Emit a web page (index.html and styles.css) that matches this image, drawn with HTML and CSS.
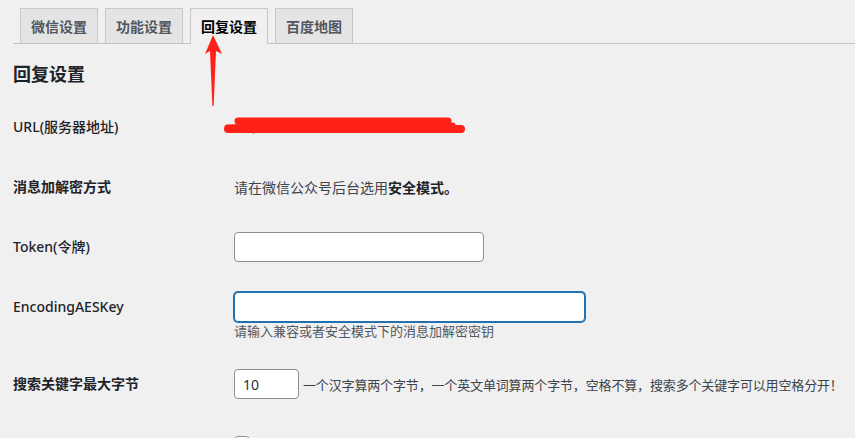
FILE: index.html
```html
<!DOCTYPE html>
<html lang="zh-CN">
<head>
<meta charset="utf-8">
<title>回复设置</title>
<link rel="stylesheet" href="styles.css">
</head>
<body>
<div class="wrap">
  <nav class="tabs">
    <a class="tab">微信设置</a>
    <a class="tab">功能设置</a>
    <a class="tab active">回复设置</a>
    <a class="tab">百度地图</a>
  </nav>
  <h2 class="title">回复设置</h2>
  <div class="form">
    <div class="row">
      <label class="label light">URL(服务器地址)</label>
      <div class="field url">
        <span class="hidden-url">http://</span>
        <svg class="scribble" width="250" height="22" viewBox="0 0 250 22">
          <path d="M15 5 L225 5" stroke="#ff2117" stroke-width="7" stroke-linecap="round" fill="none"/>
          <path d="M5 13 L238 13" stroke="#ff2117" stroke-width="8" stroke-linecap="round" fill="none"/>
          <path d="M4 11 L60 9 L230 9" stroke="#ff2117" stroke-width="5" stroke-linecap="round" fill="none"/>
        </svg>
      </div>
    </div>
    <div class="row">
      <div class="label">消息加解密方式</div>
      <div class="field text">请在微信公众号后台选用<b>安全模式。</b></div>
    </div>
    <div class="row">
      <label class="label light">Token(令牌)</label>
      <div class="field"><input class="input token" type="text"></div>
    </div>
    <div class="row">
      <label class="label light">EncodingAESKey</label>
      <div class="field col">
        <input class="input aes focus" type="text">
        <p class="desc">请输入兼容或者安全模式下的消息加解密密钥</p>
      </div>
    </div>
    <div class="row">
      <div class="label">搜索关键字最大字节</div>
      <div class="field inline">
        <input class="input small" type="text" value="10">
        <span class="note">一个汉字算两个字节，一个英文单词算两个字节，空格不算，搜索多个关键字可以用空格分开！</span>
      </div>
    </div>
    <div class="row">
      <div class="label"></div>
      <div class="field"><span class="checkbox"></span></div>
    </div>
  </div>
</div>
<svg class="arrow" width="30" height="80" viewBox="0 0 30 80">
  <path d="M13 4 L22 23 L16 20 L13.6 75 L12.4 75 L10 20 L5 23 Z" fill="#ff2117"/>
</svg>
</body>
</html>
```
FILE: styles.css
```css
html, body {
  margin: 0;
  padding: 0;
  background: #f0f0f1;
  overflow: hidden;
}
body {
  position: relative;
  font-family: "Noto Sans", "Noto Sans CJK SC", sans-serif;
  color: #1d2327;
  font-size: 14px;
  width: 855px;
  height: 438px;
}
.wrap {
  margin-left: 13px;
}
.tabs {
  display: flex;
  padding-top: 8px;
  border-bottom: 1px solid #c3c4c7;
  height: 35px;
  box-sizing: content-box;
}
.tab {
  margin-left: 7px;
  padding: 5px 10px;
  height: 24px;
  line-height: 24px;
  border: 1px solid #c8c8ca;
  border-bottom: none;
  background: #e4e4e5;
  color: #50575e;
  font-weight: 700;
  font-size: 14px;
  font-family: "Noto Sans CJK SC", sans-serif;
  white-space: nowrap;
  text-align: center;
}
.tab.active {
  background: #f0f0f1;
  color: #000;
  height: 25px;
  margin-bottom: -1px;
}
.title {
  margin: 0;
  margin-top: 17px;
  font-size: 18px;
  line-height: 24px;
  font-weight: 700;
  font-family: "Noto Sans CJK SC", sans-serif;
  color: #1d2327;
}
.form {
  margin-top: 27px;
  display: flex;
  flex-direction: column;
  gap: 30px;
}
.row {
  display: grid;
  grid-template-columns: 221px 1fr;
  min-height: 30px;
}
.label {
  line-height: 30px;
  font-weight: 700;
  font-size: 14px;
  font-family: "Noto Sans", "Noto Sans CJK SC", sans-serif;
  color: #1d2327;
}
.label.light {
  font-weight: 500;
}
.field {
  min-height: 30px;
}
.field.text {
  line-height: 30px;
  color: #3c434a;
  font-family: "Noto Sans CJK SC", sans-serif;
}
.field.text b {
  font-weight: 700;
  color: #1d2327;
}
.field.url {
  position: relative;
}
.hidden-url {
  font-size: 12px;
  line-height: 30px;
  color: #888;
  margin-left: 2px;
}
.scribble {
  position: absolute;
  left: -11px;
  top: 4px;
}
.input {
  display: block;
  box-sizing: border-box;
  height: 30px;
  border: 1px solid #8c8f94;
  border-radius: 4px;
  background: #fff;
  padding: 0 8px;
  font-size: 14px;
  font-family: "Noto Sans", sans-serif;
  color: #2c3338;
  margin: 0;
  outline: none;
}
.token { width: 250px; }
.aes { width: 351px; }
.focus {
  border-color: #2271b1;
  box-shadow: 0 0 0 1px #2271b1;
}
.col {
  display: flex;
  flex-direction: column;
}
.desc {
  margin: 0;
  font-size: 13px;
  line-height: 17px;
  color: #50575e;
  font-family: "Noto Sans CJK SC", sans-serif;
}
.inline {
  display: flex;
  align-items: center;
  gap: 4px;
}
.small { width: 65px; }
.note {
  font-size: 13px;
  color: #3c434a;
  font-family: "Noto Sans CJK SC", sans-serif;
  white-space: nowrap;
  letter-spacing: -0.15px;
}
.checkbox {
  display: block;
  margin-top: 7px;
  width: 16px;
  height: 16px;
  box-sizing: border-box;
  border: 1px solid #8c8f94;
  border-radius: 4px;
  background: #fff;
}
.arrow {
  position: absolute;
  left: 200px;
  top: 31px;
}
```
